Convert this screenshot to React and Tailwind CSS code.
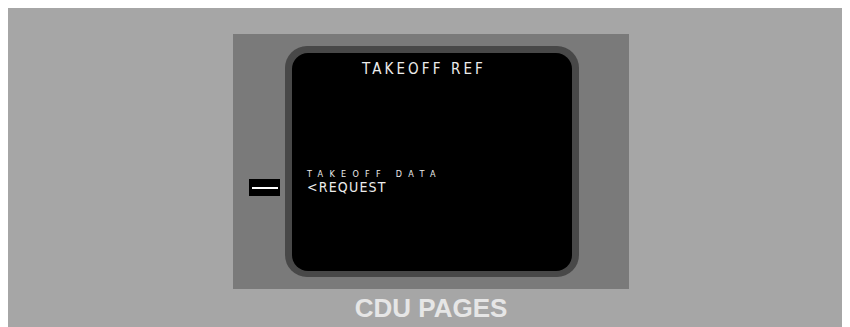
const screenFont = {fontFamily: '"DejaVu Sans Condensed", "DejaVu Sans", "Liberation Sans", sans-serif'};

const LineSelectKey = () => (
  <div className="mt-[133px] flex h-[17px] w-[31px] items-center justify-center bg-black">
    <div className="h-[2px] w-[26px] bg-white" />
  </div>
);

const CduScreen = () => (
  <div className="rounded-[22px] bg-[#484848] p-[7px] pb-[6px]">
    <div
      className="h-[218px] w-[280px] rounded-[16px] bg-black text-[#ececec]"
      style={screenFont}>
      <div className="pl-[70px] pt-[8px] text-[15px] leading-[16px] tracking-[3.1px]">
        TAKEOFF REF
      </div>
      <div className="mt-[93px] pl-[15px] text-[9px] leading-[9px] tracking-[6.3px]">
        TAKEOFF DATA
      </div>
      <div className="mt-[1px] pl-[15px] text-[14px] leading-[15px] tracking-[1.2px]">
        &lt;REQUEST
      </div>
    </div>
  </div>
);

export default function App() {
  return (
    <div className="bg-white px-2 pt-2">
      <div className="h-[319px] overflow-hidden bg-[#a6a6a6] pt-[26px]">
        <div className="ml-[225px] w-[396px]">
          <div className="flex h-[255px] items-start bg-[#7a7a7a] pl-[16px] pt-[12px]">
            <LineSelectKey />
            <div className="ml-[5px]">
              <CduScreen />
            </div>
          </div>
          <div
            className="pt-[4px] text-center text-[26px] font-bold leading-[30px] text-[#e6e6e6]"
            style={{fontFamily: '"Liberation Sans", Arial, sans-serif'}}>
            CDU PAGES
          </div>
        </div>
      </div>
    </div>
  );
}
